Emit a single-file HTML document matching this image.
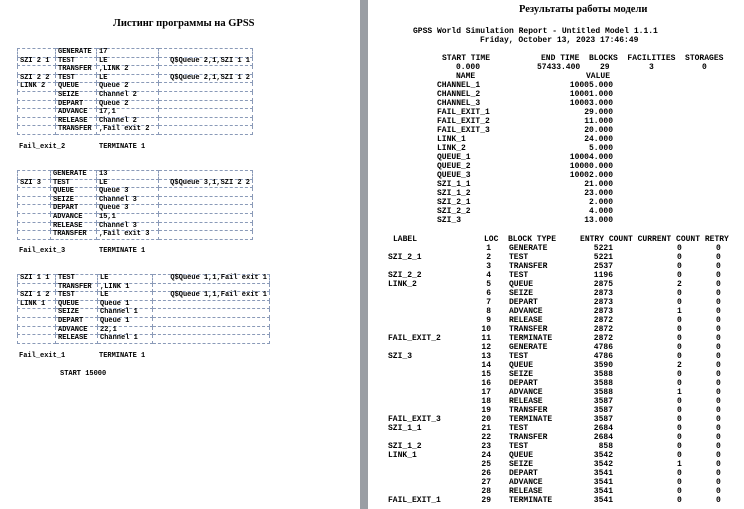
<!DOCTYPE html>
<html><head><meta charset="utf-8"><style>
body{margin:0;width:744px;height:509px;background:#fff;position:relative;overflow:hidden;font-family:"Liberation Mono",monospace;font-weight:bold;font-size:7px;color:#000}
.a{position:absolute;white-space:pre;line-height:9px}
.R{font-size:8px}
.t{font-family:"Liberation Serif","Noto Serif CJK SC",serif;font-weight:bold;font-size:10.5px}
table{position:absolute;border-collapse:collapse;font-size:7px}
td{border:1px dashed #8a9ab8;padding:0 2px;white-space:pre;line-height:7.6px;height:7.6px}
.r{text-align:right}
</style></head><body>
<div style="position:absolute;left:360px;top:0;width:8px;height:509px;background:#9a9ea4"></div>
<div class="a t" style="left:113px;top:19px">Листинг программы на GPSS</div>

<table style="left:17px;top:48px;width:236px">
<tr><td style="width:33px"></td><td style="width:36px">GENERATE</td><td style="width:57px">17</td><td></td></tr>
<tr><td>SZI 2 1</td><td>TEST</td><td>LE</td><td class="r">Q$Queue 2,1,SZI 1 1</td></tr>
<tr><td></td><td>TRANSFER</td><td>,LINK 2</td><td></td></tr>
<tr><td>SZI 2 2</td><td>TEST</td><td>LE</td><td class="r">Q$Queue 2,1,SZI 1 2</td></tr>
<tr><td>LINK 2</td><td>QUEUE</td><td>Queue 2</td><td></td></tr>
<tr><td></td><td>SEIZE</td><td>Channel 2</td><td></td></tr>
<tr><td></td><td>DEPART</td><td>Queue 2</td><td></td></tr>
<tr><td></td><td>ADVANCE</td><td>17,1</td><td></td></tr>
<tr><td></td><td>RELEASE</td><td>Channel 2</td><td></td></tr>
<tr><td></td><td>TRANSFER</td><td>,Fail exit 2</td><td></td></tr>
</table>
<div class="a" style="left:19px;top:143px">Fail_exit_2</div><div class="a" style="left:99px;top:143px">TERMINATE 1</div>

<table style="left:17px;top:170px;width:236px">
<tr><td style="width:28px"></td><td style="width:41px">GENERATE</td><td style="width:57px">13</td><td></td></tr>
<tr><td>SZI 3</td><td>TEST</td><td>LE</td><td class="r">Q$Queue 3,1,SZI 2 2</td></tr>
<tr><td></td><td>QUEUE</td><td>Queue 3</td><td></td></tr>
<tr><td></td><td>SEIZE</td><td>Channel 3</td><td></td></tr>
<tr><td></td><td>DEPART</td><td>Queue 3</td><td></td></tr>
<tr><td></td><td>ADVANCE</td><td>15,1</td><td></td></tr>
<tr><td></td><td>RELEASE</td><td>Channel 3</td><td></td></tr>
<tr><td></td><td>TRANSFER</td><td>,Fail exit 3</td><td></td></tr>
</table>
<div class="a" style="left:19px;top:247px">Fail_exit_3</div><div class="a" style="left:99px;top:247px">TERMINATE 1</div>

<table style="left:17px;top:274px;width:253px">
<tr><td style="width:33px">SZI 1 1</td><td style="width:37px">TEST</td><td style="width:50px">LE</td><td class="r">Q$Queue 1,1,Fail exit 1</td></tr>
<tr><td></td><td>TRANSFER</td><td>,LINK 1</td><td></td></tr>
<tr><td>SZI 1 2</td><td>TEST</td><td>LE</td><td class="r">Q$Queue 1,1,Fail exit 1</td></tr>
<tr><td>LINK 1</td><td>QUEUE</td><td>Queue 1</td><td></td></tr>
<tr><td></td><td>SEIZE</td><td>Channel 1</td><td></td></tr>
<tr><td></td><td>DEPART</td><td>Queue 1</td><td></td></tr>
<tr><td></td><td>ADVANCE</td><td>22,1</td><td></td></tr>
<tr><td></td><td>RELEASE</td><td>Channel 1</td><td></td></tr>
</table>
<div class="a" style="left:19px;top:352px">Fail_exit_1</div><div class="a" style="left:99px;top:352px">TERMINATE 1</div>
<div class="a" style="left:60px;top:370px">START 15000</div>

<div class="a t" style="left:519px;top:5px">Результаты работы модели</div>
<div class="a R" style="left:413px;top:27px">GPSS World Simulation Report - Untitled Model 1.1.1</div>
<div class="a R" style="left:480px;top:36px">Friday, October 13, 2023 17:46:49</div>
<div class="a R" style="left:442px;top:54px">START TIME</div>
<div class="a R" style="left:541px;top:54px">END TIME  BLOCKS  FACILITIES  STORAGES</div>
<div class="a R" style="left:456px;top:63px">0.000</div>
<div class="a R" style="left:537px;top:63px">57433.400</div>
<div class="a R" style="left:600px;top:63px">29</div>
<div class="a R" style="left:649px;top:63px">3</div>
<div class="a R" style="left:702px;top:63px">0</div>
<div class="a R" style="left:456px;top:72px">NAME</div><div class="a R" style="left:586px;top:72px">VALUE</div>
<div class="a R" style="left:437px;top:81px">CHANNEL_1
CHANNEL_2
CHANNEL_3
FAIL_EXIT_1
FAIL_EXIT_2
FAIL_EXIT_3
LINK_1
LINK_2
QUEUE_1
QUEUE_2
QUEUE_3
SZI_1_1
SZI_1_2
SZI_2_1
SZI_2_2
SZI_3</div>
<div class="a R" style="right:131px;top:81px;text-align:right">10005.000
10001.000
10003.000
29.000
11.000
20.000
24.000
5.000
10004.000
10000.000
10002.000
21.000
23.000
2.000
4.000
13.000</div>

<div class="a R" style="left:393px;top:235px">LABEL</div>
<div class="a R" style="left:484px;top:235px">LOC  BLOCK TYPE     ENTRY COUNT CURRENT COUNT RETRY</div>
<div class="a R" style="left:388px;top:244px">
SZI_2_1

SZI_2_2
LINK_2





FAIL_EXIT_2

SZI_3






FAIL_EXIT_3
SZI_1_1

SZI_1_2
LINK_1




FAIL_EXIT_1</div>
<div class="a R" style="right:253px;top:244px;text-align:right">1
2
3
4
5
6
7
8
9
10
11
12
13
14
15
16
17
18
19
20
21
22
23
24
25
26
27
28
29</div>
<div class="a R" style="left:509px;top:244px">GENERATE
TEST
TRANSFER
TEST
QUEUE
SEIZE
DEPART
ADVANCE
RELEASE
TRANSFER
TERMINATE
GENERATE
TEST
QUEUE
SEIZE
DEPART
ADVANCE
RELEASE
TRANSFER
TERMINATE
TEST
TRANSFER
TEST
QUEUE
SEIZE
DEPART
ADVANCE
RELEASE
TERMINATE</div>
<div class="a R" style="right:131px;top:244px;text-align:right">5221
5221
2537
1196
2875
2873
2873
2873
2872
2872
2872
4786
4786
3590
3588
3588
3588
3587
3587
3587
2684
2684
858
3542
3542
3541
3541
3541
3541</div>
<div class="a R" style="left:677px;top:244px">0
0
0
0
2
0
0
1
0
0
0
0
0
2
0
0
1
0
0
0
0
0
0
0
1
0
0
0
0</div>
<div class="a R" style="left:716px;top:244px">0
0
0
0
0
0
0
0
0
0
0
0
0
0
0
0
0
0
0
0
0
0
0
0
0
0
0
0
0</div>
</body></html>
